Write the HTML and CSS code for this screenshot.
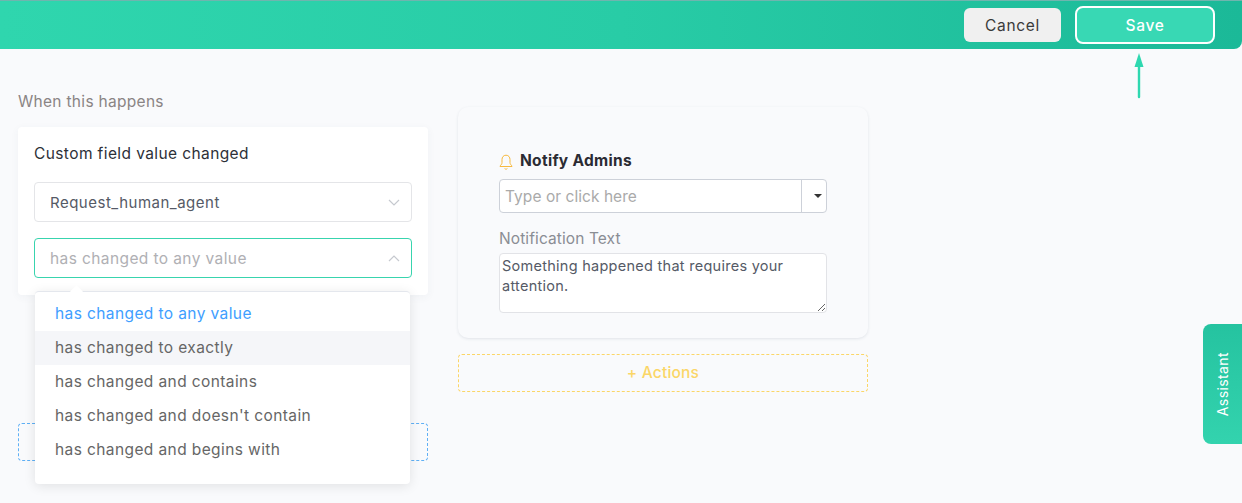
FILE: index.html
```html
<!DOCTYPE html>
<html lang="en">
	<head>
		<meta charset="UTF-8" />
		<meta name="viewport" content="width=device-width, initial-scale=1.0" />
		<title>Edit Automation</title>
		<link rel="stylesheet" href="styles.css">
	</head>
	<body>
		<header class="topbar">
			<button class="btn btn-cancel">Cancel</button>
			<button class="btn btn-save">Save</button>
		</header>

		<svg class="save-arrow" width="10" height="46" viewBox="0 0 10 46">
			<path d="M5 0 L9.5 14 L0.5 14 Z" fill="#2fd8b0" />
			<path d="M5 12 V44" stroke="#2fd8b0" stroke-width="2.4" stroke-linecap="round" />
		</svg>

		<main class="builder">
			<section class="column">
				<div class="section-label">When this happens</div>
				<div class="trigger-card">
					<div class="trigger-title">Custom field value changed</div>
					<div class="select">
						<span class="select-value">Request_human_agent</span>
						<svg class="chevron" width="12" height="7" viewBox="0 0 12 7"><path d="M1 1 L6 6 L11 1" /></svg>
					</div>
					<div class="select select-open">
						<span class="select-placeholder">has changed to any value</span>
						<svg class="chevron" width="12" height="7" viewBox="0 0 12 7"><path d="M1 6 L6 1 L11 6" /></svg>
					</div>
				</div>
				<div class="add-box add-condition"></div>

				<div class="dropdown">
					<span class="dropdown-tip"></span>
					<div class="dropdown-item selected">has changed to any value</div>
					<div class="dropdown-item hover">has changed to exactly</div>
					<div class="dropdown-item">has changed and contains</div>
					<div class="dropdown-item">has changed and doesn't contain</div>
					<div class="dropdown-item">has changed and begins with</div>
				</div>
			</section>

			<section class="column column-actions">
				<div class="action-card">
					<div class="action-title">
						<svg width="14" height="16" viewBox="0 0 14 16" fill="none" stroke="#f7b93e" stroke-width="1">
							<path d="M7 1.2 C4.4 1.2 3 3.2 3 5.6 V8.6 C3 10 2 11 1 11.9 V12.5 H13 V11.9 C12 11 11 10 11 8.6 V5.6 C11 3.2 9.6 1.2 7 1.2 Z" />
							<path d="M5.6 14.6 C6.2 15.3 7.8 15.3 8.4 14.6" />
						</svg>
						<span>Notify Admins</span>
					</div>
					<div class="combo">
						<span class="combo-placeholder">Type or click here</span>
						<span class="combo-toggle"><i class="caret"></i></span>
					</div>
					<label class="field-label">Notification Text</label>
					<textarea class="notify-text">Something happened that requires your attention.</textarea>
				</div>
				<div class="add-box add-actions">+ Actions</div>
			</section>
		</main>

		<div class="assistant-tab"><span>Assistant</span></div>
	</body>
</html>
```

FILE: styles.css
```css
* {
	box-sizing: border-box;
}
html,
body {
	height: 100%;
}
body {
	margin: 0;
	position: relative;
	overflow: hidden;
	background-color: #f9fafc;
	font-family: "Inter", "Open Sans", sans-serif;
	font-size: 15.5px;
	letter-spacing: 0.4px;
	color: #333;
}
.topbar {
	height: 49px;
	display: flex;
	justify-content: flex-end;
	align-items: center;
	gap: 14px;
	padding-right: 27px;
	background: linear-gradient(90deg, #2fd6ae 0%, #28cca6 50%, #1bb998 100%);
	border-top: 1px solid #6fb5ae;
	border-bottom-right-radius: 8px;
}
.btn {
	font-family: inherit;
	font-size: 15.5px;
	letter-spacing: 0.7px;
	border-radius: 6px;
	cursor: pointer;
}
.btn-cancel {
	width: 97px;
	height: 34px;
	background-color: #f0f0f0;
	border: none;
	color: #3a3a3a;
}
.btn-save {
	width: 140px;
	height: 38px;
	background-color: #38d8b4;
	border: 2px solid #fff;
	border-radius: 8px;
	color: #fff;
	font-weight: 500;
}
.save-arrow {
	position: absolute;
	left: 1134px;
	top: 53px;
}
.builder {
	display: flex;
	gap: 30px;
	padding-left: 18px;
}
.column {
	width: 410px;
	position: relative;
}
.section-label {
	margin-top: 42px;
	height: 36px;
	line-height: 22px;
	letter-spacing: 0.3px;
	color: #8a8484;
}
.trigger-card {
	height: 168px;
	padding: 16px 16px 0;
	background-color: #fff;
	border-radius: 4px;
	box-shadow: 0 2px 8px rgba(60, 70, 100, 0.05);
}
.trigger-title {
	height: 39px;
	line-height: 22px;
	color: #2d3038;
}
.select {
	height: 40px;
	margin-bottom: 16px;
	padding: 0 11px 0 15px;
	display: flex;
	justify-content: space-between;
	align-items: center;
	background-color: #fff;
	border: 1px solid #e4e5e8;
	border-radius: 4px;
	font-size: 15px;
	letter-spacing: 0.5px;
	color: #555a66;
}
.select-open {
	border-color: #38d4ae;
}
.select-placeholder {
	font-size: 15.5px;
	letter-spacing: 0.4px;
	color: #b0b0b4;
}
.chevron {
	fill: none;
	stroke: #c6c9cf;
	stroke-width: 1.2;
}
.add-box {
	height: 38px;
	border-radius: 4px;
}
.add-condition {
	margin-top: 128px;
	border: 1px dashed #5fb0f5;
}
.dropdown {
	position: absolute;
	left: 17px;
	top: 242px;
	width: 375px;
	height: 193px;
	padding-top: 5px;
	background-color: #fff;
	border-top: 1px solid #e4e7ed;
	border-radius: 4px;
	box-shadow: 0 2px 12px rgba(0, 0, 0, 0.1);
}
.dropdown-tip {
	position: absolute;
	left: 37px;
	top: -5px;
	width: 9px;
	height: 9px;
	background-color: #fff;
	transform: rotate(45deg);
}
.dropdown-item {
	position: relative;
	height: 34px;
	line-height: 34px;
	padding-left: 20px;
	color: #666;
}
.dropdown-item.selected {
	color: #409eff;
}
.dropdown-item.hover {
	background-color: #f5f6f9;
}
.column-actions {
	padding-top: 58px;
}
.action-card {
	height: 231px;
	padding: 40px 41px 0;
	border-radius: 10px;
	box-shadow: 0 1px 3px rgba(60, 70, 100, 0.12);
}
.action-title {
	height: 32px;
	display: flex;
	align-items: flex-start;
	gap: 7px;
	line-height: 28px;
	font-weight: 700;
	letter-spacing: 0.3px;
	color: #2b2b33;
}
.action-title svg {
	margin-top: 7px;
}
.combo {
	width: 328px;
	height: 34px;
	display: flex;
	background-color: #fff;
	border: 1px solid #cdd1d9;
	border-radius: 4px;
}
.combo-placeholder {
	flex: 1;
	padding-left: 5px;
	line-height: 33px;
	letter-spacing: 0.05px;
	color: #aaa;
}
.combo-toggle {
	width: 25px;
	display: flex;
	align-items: center;
	padding-left: 12px;
	border-left: 1px solid #cdd1d9;
}
.caret {
	width: 0;
	height: 0;
	border-left: 4px solid transparent;
	border-right: 4px solid transparent;
	border-top: 4px solid #333;
}
.field-label {
	display: block;
	margin-top: 16px;
	height: 24px;
	line-height: 20px;
	letter-spacing: 0.1px;
	color: #8a8d94;
}
.notify-text {
	display: block;
	width: 328px;
	height: 60px;
	padding: 2px;
	background-color: #fff;
	border: 1px solid #e2e3e7;
	border-radius: 4px;
	font-family: inherit;
	font-size: 14.5px;
	letter-spacing: 0.27px;
	line-height: 20px;
	color: #555a66;
}
.add-actions {
	margin-top: 16px;
	border: 1px dashed #fbd667;
	line-height: 36px;
	text-align: center;
	font-weight: 500;
	letter-spacing: 0.2px;
	color: #fbd667;
}
.assistant-tab {
	position: absolute;
	right: 0;
	top: 324px;
	width: 39px;
	height: 120px;
	display: flex;
	justify-content: center;
	align-items: center;
	background: linear-gradient(180deg, #25c3a0, #33d3ae);
	border-radius: 8px 0 0 8px;
	color: #fff;
	font-size: 14px;
	letter-spacing: 0.4px;
}
.assistant-tab span {
	writing-mode: vertical-rl;
	transform: rotate(180deg);
}
```
